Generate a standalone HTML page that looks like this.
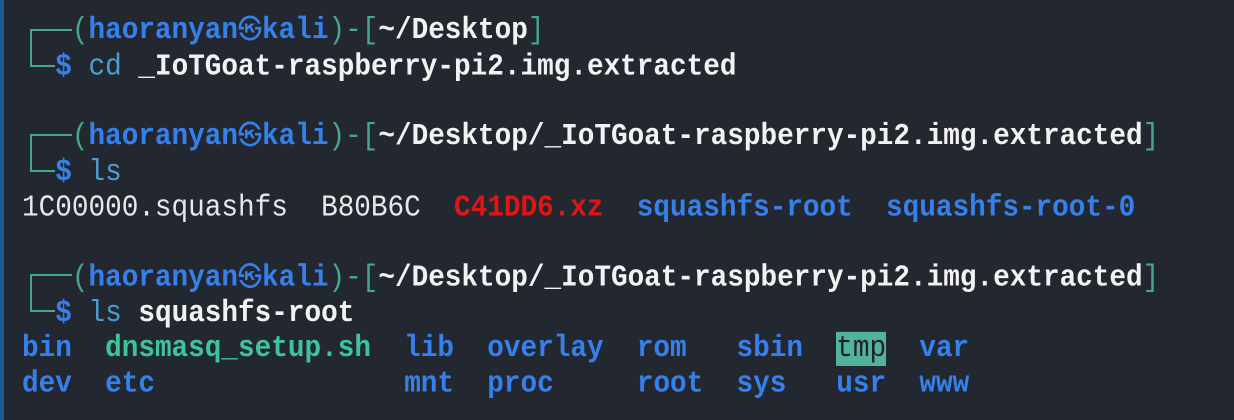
<!DOCTYPE html>
<html><head><style>
html,body{margin:0;padding:0;}
body{width:1234px;height:420px;background:#232730;overflow:hidden;position:relative;}
.stripe{position:absolute;left:0;top:0;width:4px;height:420px;background:#1d5a92;}
pre{position:absolute;left:22px;top:14px;margin:0;font-family:"Liberation Mono","Noto Sans CJK JP",monospace;font-size:27.7px;line-height:31.8px;color:#e8e8e8;transform:scaleY(1.1);transform-origin:0 0;}
.t{color:#45a88c}.b{color:#3680ec;font-weight:bold}.w{color:#f2f2f2;font-weight:bold}
.c{color:#4a9fd2}.r{color:#e01515;font-weight:bold}.g{color:#3ec49a;font-weight:bold}
.hl{background:#52b39c;color:#1e2229}
.k{font-weight:normal;font-size:24px}
.ln{position:absolute;background:#45a88c;}
</style></head><body>
<div class="stripe"></div>
<div class="ln" style="left:30px;top:29px;width:42px;height:2px"></div>
<div class="ln" style="left:30px;top:29px;width:2px;height:38px"></div>
<div class="ln" style="left:30px;top:65px;width:25px;height:2px"></div>
<div class="ln" style="left:30px;top:134px;width:42px;height:2px"></div>
<div class="ln" style="left:30px;top:134px;width:2px;height:38px"></div>
<div class="ln" style="left:30px;top:170px;width:25px;height:2px"></div>
<div class="ln" style="left:30px;top:274px;width:42px;height:2px"></div>
<div class="ln" style="left:30px;top:274px;width:2px;height:38px"></div>
<div class="ln" style="left:30px;top:310px;width:25px;height:2px"></div>
<pre><span class="t">   (</span><span class="b">haoranyan<span class="k">㉿</span>kali</span><span class="t">)-[</span><span class="w">~/Desktop</span><span class="t">]</span>
<span class="b">  $</span> <span class="c">cd</span> <span class="w">_IoTGoat-raspberry-pi2.img.extracted</span>

<span class="t">   (</span><span class="b">haoranyan<span class="k">㉿</span>kali</span><span class="t">)-[</span><span class="w">~/Desktop/_IoTGoat-raspberry-pi2.img.extracted</span><span class="t">]</span>
<span class="b">  $</span> <span class="c">ls</span>
1C00000.squashfs  B80B6C  <span class="r">C41DD6.xz</span>  <span class="b">squashfs-root</span>  <span class="b">squashfs-root-0</span>

<span class="t">   (</span><span class="b">haoranyan<span class="k">㉿</span>kali</span><span class="t">)-[</span><span class="w">~/Desktop/_IoTGoat-raspberry-pi2.img.extracted</span><span class="t">]</span>
<span class="b">  $</span> <span class="c">ls</span> <span class="w">squashfs-root</span>
<span class="b">bin</span>  <span class="g">dnsmasq_setup.sh</span>  <span class="b">lib</span>  <span class="b">overlay</span>  <span class="b">rom</span>   <span class="b">sbin</span>  <span class="hl">tmp</span>  <span class="b">var</span>
<span class="b">dev</span>  <span class="b">etc</span>               <span class="b">mnt</span>  <span class="b">proc</span>     <span class="b">root</span>  <span class="b">sys</span>   <span class="b">usr</span>  <span class="b">www</span></pre>
</body></html>
